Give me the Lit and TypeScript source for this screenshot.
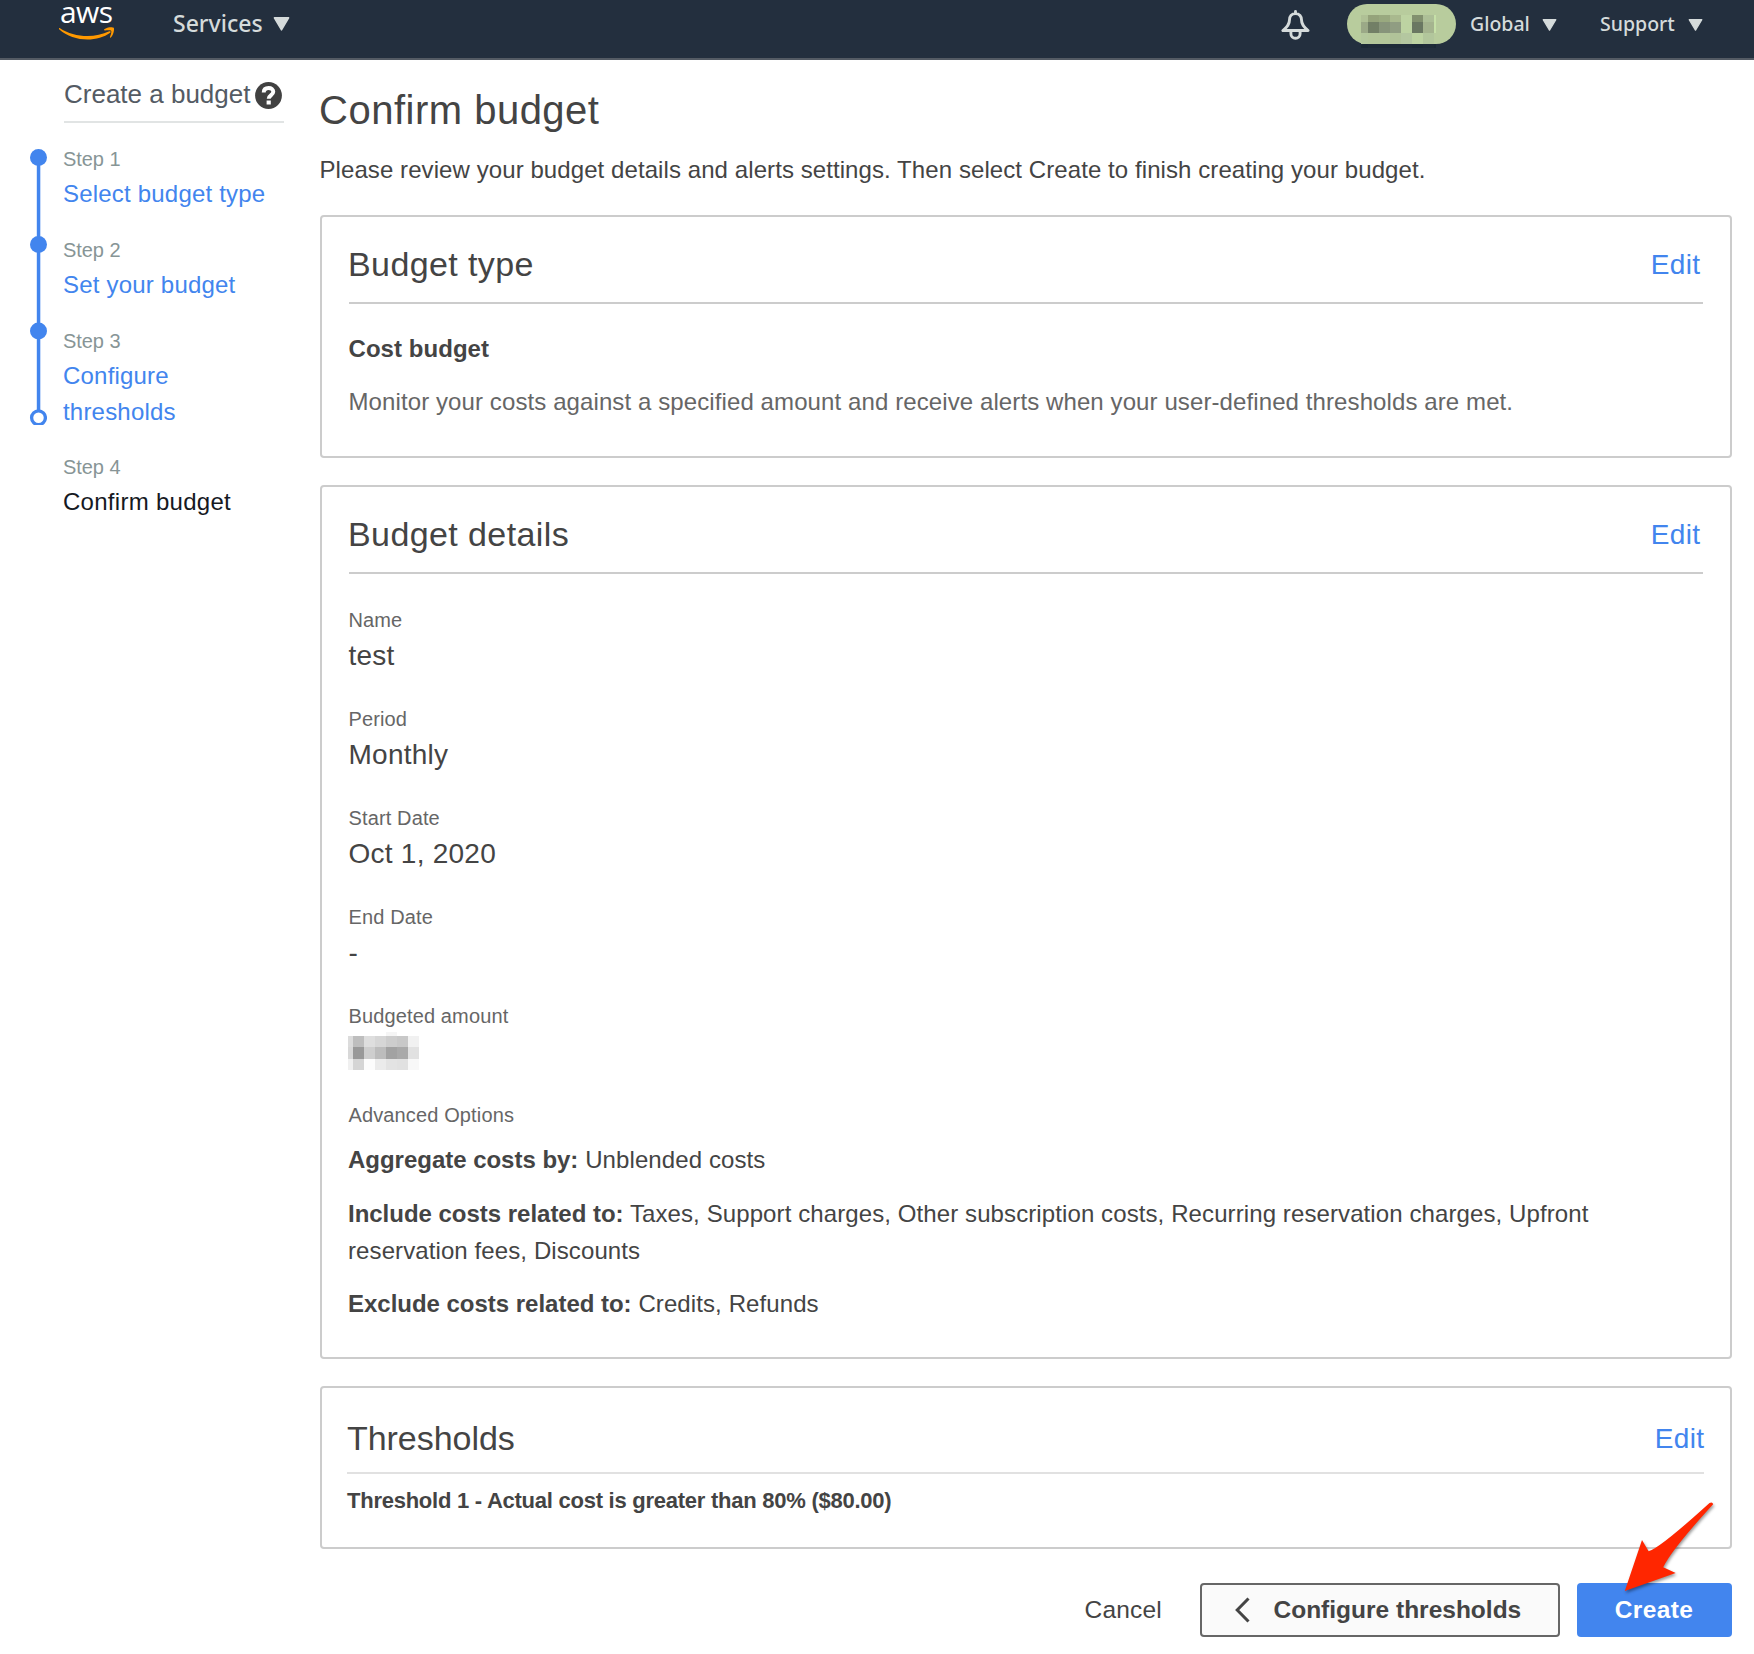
import { LitElement, html, css, svg } from "lit";
import { customElement, property } from "lit/decorators.js";

interface Step {
  label: string;
  title: string;
  current?: boolean;
}

const STEPS: Step[] = [
  { label: "Step 1", title: "Select budget type" },
  { label: "Step 2", title: "Set your budget" },
  { label: "Step 3", title: "Configure thresholds" },
  { label: "Step 4", title: "Confirm budget", current: true },
];

const FIELDS: [string, string][] = [
  ["Name", "test"],
  ["Period", "Monthly"],
  ["Start Date", "Oct 1, 2020"],
  ["End Date", "-"],
];

const OPTIONS: [string, string][] = [
  ["Aggregate costs by:", "Unblended costs"],
  [
    "Include costs related to:",
    "Taxes, Support charges, Other subscription costs, Recurring reservation charges, Upfront reservation fees, Discounts",
  ],
  ["Exclude costs related to:", "Credits, Refunds"],
];

// Redaction mosaics: column edges, row edges and one colour per cell.
const ACCOUNT_MOSAIC = {
  xs: [0, 7, 18, 29, 40, 51, 62, 73, 75],
  ys: [0, 7, 18, 29, 33],
  rows: [
    ["#afc095", "#95a37b", "#99a97f", "#a9b98e", "#bdd3a2", "#82906f", "#adbf97", "#c6e0a8"],
    ["#9ba987", "#727f66", "#87947a", "#909d82", "#bdd3a2", "#6a7762", "#a5b48f", "#c6e0a8"],
    ["#b4c89d", "#b4c79a", "#b4c79a", "#b1c399", "#b4c7a0", "#bdd3a2", "#b2c69c", "#b8cc9d"],
    ["#1b2936", "#1e2b38", "#1e2b38", "#1e2b38", "#1e2b38", "#1b2936", "#1e2b38", "#1b2936"],
  ],
};
const AMOUNT_MOSAIC = {
  xs: [0, 5, 16, 27, 38, 49, 60, 71],
  ys: [0, 4, 15, 27, 38],
  rows: [
    ["#fff", "#fff", "#fff", "#fff", "#f5f5f5", "#fff", "#fff"],
    ["#dcdcdc", "#bebebe", "#dedede", "#d6d6d6", "#cdcdcd", "#c8c8c8", "#f1f1f1"],
    ["#d8d8d8", "#999999", "#cecece", "#bcbcbc", "#a2a2a2", "#a9a9a9", "#e1e1e1"],
    ["#f0f0f0", "#d5d5d5", "#fcfcfc", "#ebebeb", "#e3e3e3", "#e1e1e1", "#f8f8f8"],
  ],
};

function mosaic(m: { xs: number[]; ys: number[]; rows: string[][] }, cls: string) {
  const w = m.xs[m.xs.length - 1];
  const h = m.ys[m.ys.length - 1];
  return html`<svg class=${cls} width=${w} height=${h} viewBox="0 0 ${w} ${h}" shape-rendering="crispEdges">
    ${m.rows.map((row, r) =>
      row.map(
        (fill, c) => svg`<rect x=${m.xs[c]} y=${m.ys[r]} width=${m.xs[c + 1] - m.xs[c]}
          height=${m.ys[r + 1] - m.ys[r]} fill=${fill}></rect>`
      )
    )}
  </svg>`;
}

@customElement("console-header")
class ConsoleHeader extends LitElement {
  static styles = css`
    :host { display: block; background: #232f3e; border-bottom: 2px solid #545b64; }
    .bar {
      display: flex; align-items: center; height: 46px; padding: 0 51px 12px 59px;
      font-family: "Noto Sans", "Open Sans", sans-serif; font-weight: 500; color: #d5dbdb;
    }
    .logo { display: block; font-family: "Open Sans", sans-serif; }
    .logo-text { font-size: 30px; font-weight: 500; fill: #fff; }
    .menu { display: flex; align-items: center; justify-content: space-between; white-space: nowrap; line-height: 30px; }
    .menu svg { display: block; margin-top: 2px; }
    .services { width: 117px; margin-left: 58px; margin-right: auto; font-size: 23px; }
    .bell { display: block; margin: 3px 37px 0 0; }
    .pill { display: flex; width: 95px; height: 29px; padding: 11px 0 0 14px; border-radius: 20px; background: #b8cc9d; margin: 2px 14px 0 0; }
    .redacted { display: block; flex: none; }
    .global { width: 87px; margin-right: 43px; font-size: 19.500px; }
    .support { width: 103px; font-size: 19.500px; }
    .global span, .support span { padding-top: 2px; }
    .global svg, .support svg { margin-top: 3px; }
  `;

  private caret(w: number, h: number) {
    return html`<svg width=${w} height=${h} viewBox="0 0 16 13" preserveAspectRatio="none">
      <path d="M1.300 .8h13.400L8 12z" fill="#d5dbdb" stroke="#d5dbdb" stroke-width="1.400" stroke-linejoin="round"></path>
    </svg>`;
  }

  render() {
    return html`<header class="bar">
      <svg class="logo" width="56" height="46" viewBox="0 0 56 46">
        <text class="logo-text" x="1" y="23" textLength="53">aws</text>
        <path d="M.6 28C15 37.500 35 38.500 50.300 31.300c1.300-.6 2 .6.900 1.500C38 42.600 14 42 .1 29.300c-.6-.7-.2-1.600.5-1.300z" fill="#f90"></path>
        <path d="M45.300 29.300c2.500-2.300 8.500-2.500 9.500-1.400.8 1-.3 7.100-3 9.500-.6.500-1.100.2-.8-.5.600-1.700 1.900-5.200 1.100-6.200-.7-.9-4.100-.5-6.100-.3-.9.100-1.200-.6-.7-1.100z" fill="#f90"></path>
      </svg>
      <div class="menu services"><span>Services</span>${this.caret(17, 14)}</div>
      <svg class="bell" width="29" height="30" viewBox="0 0 29 30" fill="none" stroke="#d5dbdb" stroke-width="2.900" stroke-linejoin="round" stroke-linecap="round">
        <path d="M14.500 1.500v2M14.500 3.500c-4 0-6 3.300-6 6.200 0 4.800-2.200 7.200-6.600 10.800h25.200c-4.400-3.600-6.600-6-6.600-10.800 0-2.900-2-6.200-6-6.200z"></path>
        <path d="M9.900 21.500v2.200a4.600 4.600 0 0 0 9.200 0v-2.200"></path>
      </svg>
      <div class="pill">${mosaic(ACCOUNT_MOSAIC, "redacted")}</div>
      <div class="menu global"><span>Global</span>${this.caret(15, 12)}</div>
      <div class="menu support"><span>Support</span>${this.caret(15, 12)}</div>
    </header>`;
  }
}

@customElement("step-nav")
class StepNav extends LitElement {
  static styles = css`
    :host { display: block; }
    .title {
      display: flex; align-items: flex-start; margin-left: 64px; width: 220px; padding: 19px 0 12px;
      border-bottom: 2px solid #e1e4e4; font-size: 26px; line-height: 30px; color: #545b64; white-space: nowrap;
    }
    .title span { width: 191px; }
    .help { display: block; margin-top: 3px; }
    .body { display: flex; align-items: flex-start; padding-top: 24px; }
    .track { display: block; margin: 1px 16px 0 29px; flex: none; }
    .steps { display: flex; flex-direction: column; gap: 26px; width: 210px; margin: 0; padding: 0; list-style: none; }
    .steps li:last-child { margin-top: -1px; }
    .label { font-size: 20px; line-height: 24px; color: #879596; margin-bottom: 5px; letter-spacing: -0.05px; }
    .name { font-size: 24px; line-height: 36px; color: #4285ee; letter-spacing: 0.2px; }
    .current { color: #16191f; letter-spacing: 0.28px; }
  `;

  render() {
    return html`<div class="title">
        <span>Create a budget</span>
        <svg class="help" width="27" height="27" viewBox="0 0 27 27">
          <circle cx="13.500" cy="13.500" r="13.400" fill="#414141"></circle>
          <path d="M8.700 10.500c.1-3 2-4.500 4.900-4.500 2.700 0 4.700 1.400 4.700 3.800 0 3.300-4.600 3.300-4.600 7" fill="none" stroke="#fff" stroke-width="3.900"></path>
          <rect x="11.600" y="18.500" width="4.200" height="4" fill="#fff"></rect>
        </svg>
      </div>
      <div class="body">
        <svg class="track" width="18" height="277" viewBox="0 0 18 277">
          <rect x="7.800" y="9" width="3.500" height="254" fill="#4285ee"></rect>
          ${[9.500, 96.400, 183].map((y) => svg`<circle cx="9.500" cy=${y} r="8.500" fill="#4285ee"></circle>`)}
          <circle cx="9.500" cy="269.700" r="6.900" fill="#fff" stroke="#4285ee" stroke-width="3.300"></circle>
        </svg>
        <ol class="steps">
          ${STEPS.map(
            (s) => html`<li><div class="label">${s.label}</div><div class="name ${s.current ? "current" : ""}">${s.title}</div></li>`
          )}
        </ol>
      </div>`;
  }
}

@customElement("review-card")
class ReviewCard extends LitElement {
  @property() heading = "";
  @property({ type: Boolean, reflect: true }) compact = false;

  static styles = css`
    :host { display: block; border: 2px solid #ccc; border-radius: 4px; padding: 27px 27px 36px; background: #fff; }
    :host([compact]) { padding: 30px 26px 31px 25px; }
    .head { display: flex; justify-content: space-between; padding-bottom: 18px; border-bottom: 2px solid #ccc; line-height: 40px; }
    :host([compact]) .head { padding-bottom: 14px; border-bottom-color: #e1e1e1; }
    .heading { font-size: 34px; letter-spacing: 0.4px; color: #444; margin-left: -1px; }
    :host([compact]) .heading { letter-spacing: -0.05px; margin-left: 0; }
    .edit { font-size: 28px; letter-spacing: 0.4px; color: #4285ee; padding-top: 1px; height: 39px; margin-right: 2.500px; }
    :host([compact]) .edit { margin-right: -0.500px; }
  `;

  render() {
    return html`<div class="head"><span class="heading">${this.heading}</span><a class="edit">Edit</a></div><slot></slot>`;
  }
}

@customElement("app-root")
class AppRoot extends LitElement {
  static styles = css`
    :host {
      display: block; position: relative; height: 1654px; overflow: hidden; background: #fff; color: #444;
      font-family: "Liberation Sans", Arial, sans-serif;
    }
    .page { display: grid; grid-template-columns: 284px 1412px; column-gap: 36px; }
    .main { display: flex; flex-direction: column; padding-top: 26px; }
    h1 { margin: 0 0 18px -1px; font-size: 40px; line-height: 48px; font-weight: 400; letter-spacing: 0.5px; }
    .intro { margin: 0 0 27px -0.500px; font-size: 24px; line-height: 36px; letter-spacing: 0.08px; }
    .cards { display: flex; flex-direction: column; gap: 27px; }
    .type { margin: 27px 0 0 -0.500px; font-size: 24px; line-height: 36px; font-weight: 700; letter-spacing: 0.05px; }
    .about { margin: 17px 0 -0.500px -0.500px; font-size: 24px; line-height: 36px; letter-spacing: 0.1px; color: #666; white-space: nowrap; }
    .fields { display: flex; flex-direction: column; gap: 35px; margin-top: 34px; }
    .field { display: flex; flex-direction: column; gap: 5px; height: 64px; }
    .advanced { height: 24px; }
    .label { font-size: 20px; line-height: 24px; color: #666; letter-spacing: 0.13px; margin-left: -0.500px; }
    .value { font-size: 28px; line-height: 36px; letter-spacing: 0.25px; margin-left: -0.500px; padding-top: 1px; }
    .amount { display: block; flex: none; margin: -1px 0 0 -1px; }
    .options { display: flex; flex-direction: column; gap: 17px; margin: 14px 0 0 -1px; font-size: 24px; line-height: 37px; letter-spacing: 0.1px; }
    .options b { letter-spacing: -0.02px; }
    .options div:last-child { margin: -1px 0 -0.500px; }
    .threshold { margin-top: 12px; font-size: 22px; line-height: 30px; font-weight: 700; letter-spacing: -0.250px; }
    .actions { display: flex; justify-content: flex-end; align-items: center; margin-top: 34px; height: 54px; font-size: 24.500px; }
    .cancel { margin-right: 38px; letter-spacing: 0.2px; }
    .button { display: flex; align-items: center; box-sizing: border-box; height: 54px; border-radius: 4px; font-weight: 700; }
    .back { width: 360px; padding-left: 33px; gap: 23.500px; border: 2px solid #666; background: #fafafa; margin-right: 17px; }
    .create { width: 155px; padding-right: 1px; justify-content: center; background: #4285ee; color: #fff; letter-spacing: 0.4px; }
    .pointer { position: absolute; left: 1614px; top: 1492px; filter: drop-shadow(1px 2px 1.500px rgba(0, 0, 0, 0.4)); }
  `;

  render() {
    return html`<console-header></console-header>
      <div class="page">
        <step-nav></step-nav>
        <main class="main">
          <h1>Confirm budget</h1>
          <p class="intro">Please review your budget details and alerts settings. Then select Create to finish creating your budget.</p>
          <div class="cards">
            <review-card heading="Budget type">
              <div class="type">Cost budget</div>
              <div class="about">Monitor your costs against a specified amount and receive alerts when your user-defined thresholds are met.</div>
            </review-card>
            <review-card heading="Budget details">
              <div class="fields">
                ${FIELDS.map(([k, v]) => html`<div class="field"><span class="label">${k}</span><span class="value">${v}</span></div>`)}
                <div class="field"><span class="label">Budgeted amount</span>${mosaic(AMOUNT_MOSAIC, "amount")}</div>
                <div class="advanced label">Advanced Options</div>
              </div>
              <div class="options">${OPTIONS.map(([k, v]) => html`<div><b>${k}</b> ${v}</div>`)}</div>
            </review-card>
            <review-card heading="Thresholds" compact>
              <div class="threshold">Threshold 1 - Actual cost is greater than 80% ($80.00)</div>
            </review-card>
          </div>
          <div class="actions">
            <span class="cancel">Cancel</span>
            <span class="button back">
              <svg width="15" height="26" viewBox="0 0 15 26" fill="none" stroke="#444" stroke-width="3"><path d="M13.500 1.500L2.200 13l11.300 11.500"></path></svg>
              <span>Configure thresholds</span>
            </span>
            <span class="button create">Create</span>
          </div>
        </main>
      </div>
      <svg class="pointer" width="110" height="110" viewBox="1614 1492 110 110">
        <path d="M1624.800 1591L1642 1540l6.600 11.300Q1660 1548 1709.500 1503q3-1.500 3.700 1.300Q1672 1549 1663.200 1567.300l12.500 5.700z" fill="#ff2600"></path>
      </svg>`;
  }
}
